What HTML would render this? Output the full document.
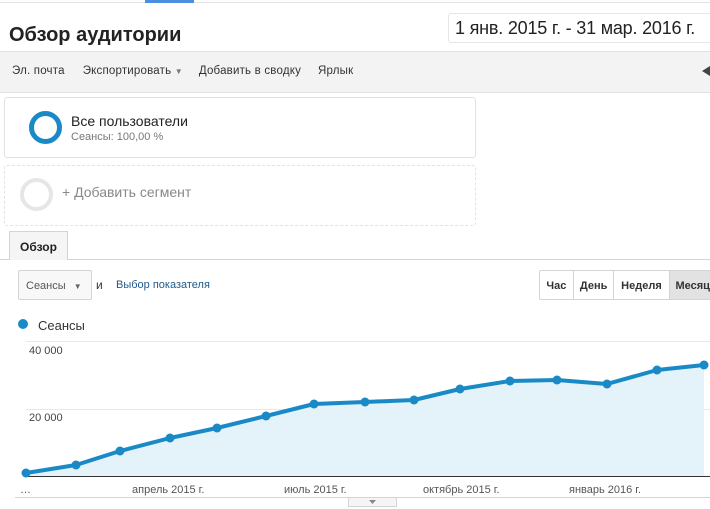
<!DOCTYPE html>
<html><head><meta charset="utf-8"><style>
*{margin:0;padding:0;box-sizing:border-box}
body{width:710px;height:509px;overflow:hidden;background:#fff;font-family:"Liberation Sans",sans-serif;position:relative;color:#222}
.a{position:absolute}
</style></head><body>
<div class="a" style="left:0;top:2px;width:710px;height:1px;background:#e4e4e4"></div>
<div class="a" style="left:145px;top:0;width:49px;height:3px;background:#4a8fe0"></div>
<div class="a" style="left:9px;top:24px;font-size:20px;font-weight:bold;color:#222">Обзор аудитории</div>
<div class="a" style="left:448px;top:13px;width:270px;height:30px;border:1px solid #e6e6e6;border-radius:3px;font-size:18px;padding:4px 0 0 6px;white-space:nowrap;color:#222;letter-spacing:-0.2px">1 янв. 2015 г. - 31 мар. 2016 г.</div>
<div class="a" style="left:0;top:51px;width:710px;height:42px;background:#f3f3f3;border-top:1px solid #e2e2e2;border-bottom:1px solid #e2e2e2"></div>
<div class="a" style="left:12px;top:65px;font-size:11.5px;color:#333;white-space:nowrap;letter-spacing:0.2px">Эл. почта<span style="margin-left:18px">Экспортировать <span style="font-size:8px;color:#777">▼</span></span><span style="margin-left:16px">Добавить в сводку</span><span style="margin-left:17px">Ярлык</span></div>
<div class="a" style="left:702px;top:66px;width:0;height:0;border-top:5px solid transparent;border-bottom:5px solid transparent;border-right:8px solid #444"></div>
<div class="a" style="left:4px;top:97px;width:472px;height:61px;border:1px solid #e2e2e2;border-radius:3px"></div>
<div class="a" style="left:29px;top:111px;width:33px;height:33px;border:5px solid #1a8ac6;border-radius:50%"></div>
<div class="a" style="left:71px;top:113px;font-size:14px;color:#222">Все пользователи</div>
<div class="a" style="left:71px;top:131px;font-size:11px;color:#777">Сеансы: 100,00 %</div>
<div class="a" style="left:4px;top:165px;width:472px;height:61px;border:1px dashed #e2e2e2;border-radius:3px"></div>
<div class="a" style="left:20px;top:178px;width:33px;height:33px;border:4px solid #e6e6e6;border-radius:50%"></div>
<div class="a" style="left:62px;top:184px;font-size:14px;color:#888">+ Добавить сегмент</div>
<div class="a" style="left:0;top:259px;width:710px;height:1px;background:#d4d4d4"></div>
<div class="a" style="left:9px;top:231px;width:59px;height:29px;background:#f5f5f5;border:1px solid #d4d4d4;border-bottom:none;font-size:12px;font-weight:bold;text-align:center;padding-top:8px">Обзор</div>
<div class="a" style="left:18px;top:270px;width:74px;height:30px;border:1px solid #d4d4d4;border-radius:2px;background:#f8f8f8;font-size:11px;color:#555;padding:9px 0 0 7px">Сеансы <span style="font-size:8px;color:#666;margin-left:5px">▼</span></div>
<div class="a" style="left:96px;top:278px;font-size:12px;color:#333">и</div>
<div class="a" style="left:116px;top:279px;font-size:11px;color:#1e5a8c">Выбор показателя</div>
<div class="a" style="left:539px;top:270px;height:30px;border:1px solid #d4d4d4;border-radius:2px;display:flex;font-size:11px;font-weight:bold;color:#333;width:180px;overflow:hidden">
<div style="width:35px;text-align:center;padding-top:9px;border-right:1px solid #d4d4d4">Час</div>
<div style="width:42px;text-align:center;padding-top:9px;border-right:1px solid #d4d4d4">День</div>
<div style="width:57px;text-align:center;padding-top:9px;border-right:1px solid #d4d4d4">Неделя</div>
<div style="width:50px;padding:9px 0 0 6px;background:#e2e2e2">Месяц</div></div>
<div class="a" style="left:18px;top:319px;width:10px;height:10px;border-radius:50%;background:#1a8ac6"></div>
<div class="a" style="left:38px;top:318px;font-size:13px;color:#333">Сеансы</div>
<svg class="a" style="left:0;top:0" width="710" height="509">
<line x1="26" y1="341.5" x2="710" y2="341.5" stroke="#e8e8e8"/>
<line x1="26" y1="409.5" x2="710" y2="409.5" stroke="#e8e8e8"/>
<polygon points="26,473 76,465 120,451 170,438 217,428 266,416 314,404 365,402 414,400 460,389 510,381 557,380 607,384 657,370 704,365 704,476 26,476" fill="#e4f2f9"/>
<line x1="26" y1="476.5" x2="710" y2="476.5" stroke="#333"/>
<polyline points="26,473 76,465 120,451 170,438 217,428 266,416 314,404 365,402 414,400 460,389 510,381 557,380 607,384 657,370 704,365" fill="none" stroke="#1a8ac6" stroke-width="4" stroke-linejoin="round"/>
<g fill="#1a8ac6"><circle cx="26" cy="473" r="4.5"/><circle cx="76" cy="465" r="4.5"/><circle cx="120" cy="451" r="4.5"/><circle cx="170" cy="438" r="4.5"/><circle cx="217" cy="428" r="4.5"/><circle cx="266" cy="416" r="4.5"/><circle cx="314" cy="404" r="4.5"/><circle cx="365" cy="402" r="4.5"/><circle cx="414" cy="400" r="4.5"/><circle cx="460" cy="389" r="4.5"/><circle cx="510" cy="381" r="4.5"/><circle cx="557" cy="380" r="4.5"/><circle cx="607" cy="384" r="4.5"/><circle cx="657" cy="370" r="4.5"/><circle cx="704" cy="365" r="4.5"/></g>
<g font-family="Liberation Sans" font-size="11" fill="#444"><text x="29" y="354">40 000</text><text x="29" y="421">20 000</text></g>
<g font-family="Liberation Sans" font-size="11" fill="#555"><text x="20" y="493">…</text><text x="132" y="493">апрель 2015 г.</text><text x="284" y="493">июль 2015 г.</text><text x="423" y="493">октябрь 2015 г.</text><text x="569" y="493">январь 2016 г.</text></g>
<line x1="15" y1="497.5" x2="710" y2="497.5" stroke="#d4d4d4"/>
<rect x="348.5" y="497.5" width="48" height="9" fill="#f5f5f5" stroke="#d4d4d4"/>
<polygon points="369,500 376,500 372.5,504" fill="#888"/>
</svg>
</body></html>
